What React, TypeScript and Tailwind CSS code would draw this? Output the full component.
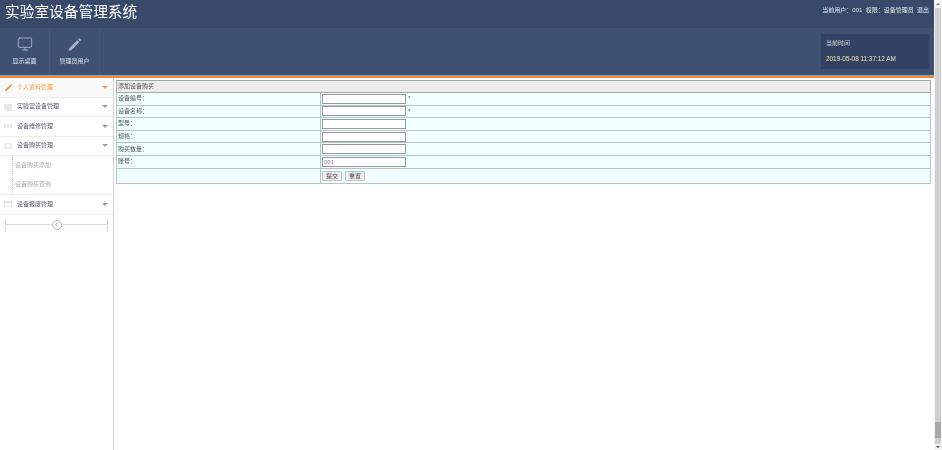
import { ChevronLeft, Monitor } from "lucide-react";

const font = "font-['Liberation_Sans','Noto_Sans_CJK_SC',sans-serif]";

const fields = [
  { label: "设备编号：", required: true },
  { label: "设备名称：", required: true },
  { label: "型号：" },
  { label: "规格：" },
  { label: "购买数量：" },
  { label: "账号：", value: "001" },
];

function Caret({ color = "border-t-[#9a9ea5]" }: { color?: string }) {
  return <span className={`ml-auto mr-[5px] h-0 w-0 border-x-[3px] border-t-[3px] border-x-transparent ${color}`} />;
}

function PencilGlyph({ size, color }: { size: number; color: string }) {
  return (
    <svg width={size} height={size} viewBox="0 0 14 14" fill={color} className="shrink-0">
      <path d="M1.500 13l.6-2.600L9.600 3l1.800 1.800L4 12.300zM10.300 2.300l.9-.9a.6.6 0 0 1 .8 0l1 1a.6.6 0 0 1 0 .8l-.9.900z" />
    </svg>
  );
}

function MenuIcon({ kind }: { kind: "screen" | "dots" | "grid" | "box" }) {
  return (
    <svg width="9" height="8" viewBox="0 0 9 8" className="mx-[4px] shrink-0" fill="#e6e8ea">
      {kind === "screen" && <path d="M0 1h8v5H0zM1 6.500h8V8H1z" />}
      {kind === "dots" && <path d="M0 2h2v4H0zM3 2h2v4H3zM6 2h2v4H6z" />}
      {kind === "grid" && <path d="M0 1h3.500v2.500H0zM4.500 1H8v2.500H4.500zM0 4.500h3.500V7H0zM4.500 4.500H8V7H4.500z" />}
      {kind === "box" && <path d="M0 1h8v6H0zM1 3v3h6V3z" fillRule="evenodd" />}
    </svg>
  );
}

function MenuRow({ label, kind }: { label: string; kind: "screen" | "dots" | "grid" | "box" }) {
  return (
    <div className="flex h-[19.5px] items-center border-b border-[#eeeeee] text-[#555a66]">
      <MenuIcon kind={kind} />
      <span>{label}</span>
      <Caret />
    </div>
  );
}

export default function App() {
  return (
    <div className={`${font} flex h-[450px] w-[942px] overflow-hidden bg-white text-[6px] blur-[0.3px]`}>
      <div className="flex w-[934px] flex-col">
        <header className="border-b-[3px] border-[#f58a2e] bg-[#3e5172]">
          <div className="flex h-[28px] justify-between border-b border-[#3a4a66] bg-[#384969] pl-[5px] pr-[5px]">
            <h1 className="mt-[5px] text-[14.700px] leading-none text-white">实验室设备管理系统</h1>
            <span className="mt-[6px] text-[6px] text-[#e5e8ee]">当前用户：001&nbsp;&nbsp;权限：设备管理员&nbsp;&nbsp;退出</span>
          </div>
          <div className="flex h-[47px]">
            <div className="flex w-[50px] flex-col items-center justify-center gap-[5px] border-r border-[#46597a] pb-[1px] text-[#dfe4ec]">
              <Monitor size={16} strokeWidth={1.1} className="text-[#c3cbd8]" />
              <span>显示桌面</span>
            </div>
            <div className="flex w-[50px] flex-col items-center justify-center gap-[5px] border-r border-[#46597a] pb-[1px] text-[#dfe4ec]">
              <PencilGlyph size={15} color="#aab4c4" />
              <span>管理员用户</span>
            </div>
            <div className="ml-auto mr-[5px] mt-[6px] flex h-[35px] w-[108px] flex-col justify-center gap-[6px] bg-[#334263] pl-[5px]">
              <span className="text-[#cfd5df]">当前时间</span>
              <span className="text-[6.400px] text-[#e8e6c8]">2019-05-08 11:37:12 AM</span>
            </div>
          </div>
        </header>

        <div className="flex flex-1">
          <aside className="w-[114px] shrink-0 border-r border-[#cfd3d8]">
            <div className="flex h-[19.5px] items-center border-b border-[#eeeeee] bg-[#fafafa] text-[#f0a050]">
              <span className="mx-[4px]"><PencilGlyph size={9} color="#f28c28" /></span>
              <span>个人资料管理</span>
              <Caret color="border-t-[#f0a050]" />
            </div>
            <MenuRow label="实验室设备管理" kind="screen" />
            <MenuRow label="设备维修管理" kind="dots" />
            <MenuRow label="设备购买管理" kind="grid" />
            <div className="border-b border-[#eeeeee] pl-[12px]">
              <div className="flex h-[38px] flex-col border-l border-dotted border-[#c8ccd2] text-[#a8acb2]">
                <span className="flex h-[19px] items-center">-设备购买添加</span>
                <span className="flex h-[19px] items-center">-设备购买查询</span>
              </div>
            </div>
            <MenuRow label="设备报废管理" kind="box" />
            <div className="mx-[5px] mt-[3px] flex h-[14px] items-center border-x border-[#d8d8d8]">
              <div className="h-px flex-1 bg-[#dddddd]" />
              <span className="flex h-[10px] w-[10px] items-center justify-center rounded-full border border-[#bdbdbd] bg-white">
                <ChevronLeft size={7} className="text-[#666666]" />
              </span>
              <div className="h-px flex-1 bg-[#dddddd]" />
            </div>
          </aside>

          <main className="flex-1 pl-[2px] pr-[3px] pt-[2px]">
            <table className="w-full border-collapse border border-[#8f8f8f] text-[#555555]">
              <tbody>
                <tr className="h-[12px] bg-[#ececec]">
                  <td colSpan={2} className="border border-[#a8a8a8] px-[1px] py-0">添加设备购买</td>
                </tr>
                {fields.map((f) => (
                  <tr key={f.label} className="h-[12.600px] bg-[#f0ffff]">
                    <td className="w-[204px] border border-[#b4c4c4] px-[1px] py-0">{f.label}</td>
                    <td className="border border-[#b4c4c4] py-0 pl-[1px]">
                      <div className="flex items-center gap-[2px]">
                        <input
                          readOnly
                          value={f.value ?? ""}
                          className="h-[10px] w-[84px] border border-[#999999] bg-white px-[1px] text-[6px] text-[#888888]"
                        />
                        {f.required && <span>*</span>}
                      </div>
                    </td>
                  </tr>
                ))}
                <tr className="h-[15px] bg-[#f0ffff]">
                  <td className="border border-[#b4c4c4]" />
                  <td className="border border-[#b4c4c4] py-0 pl-[1px]">
                    <div className="flex gap-[3px]">
                      <button className="h-[10px] w-[20px] rounded-[1px] border border-[#c4c4c4] bg-[#efefef] text-[6px] text-[#444444]">提交</button>
                      <button className="h-[10px] w-[20px] rounded-[1px] border border-[#c4c4c4] bg-[#efefef] text-[6px] text-[#444444]">重置</button>
                    </div>
                  </td>
                </tr>
              </tbody>
            </table>
          </main>
        </div>
      </div>

      <div className="flex w-[8px] flex-col items-center bg-[#f4f4f4]">
        <div className="mt-[3px] h-0 w-0 border-x-[2px] border-b-[2px] border-x-transparent border-b-[#777777]" />
        <div className="mt-[3px] flex w-[6px] flex-1 flex-col justify-end bg-[#cfcfcf]">
          <div className="mb-[6px] h-[16px] bg-[#a8a8a8]" />
        </div>
        <div className="my-[2px] h-0 w-0 border-x-[2px] border-t-[2px] border-x-transparent border-t-[#444444]" />
      </div>
    </div>
  );
}
